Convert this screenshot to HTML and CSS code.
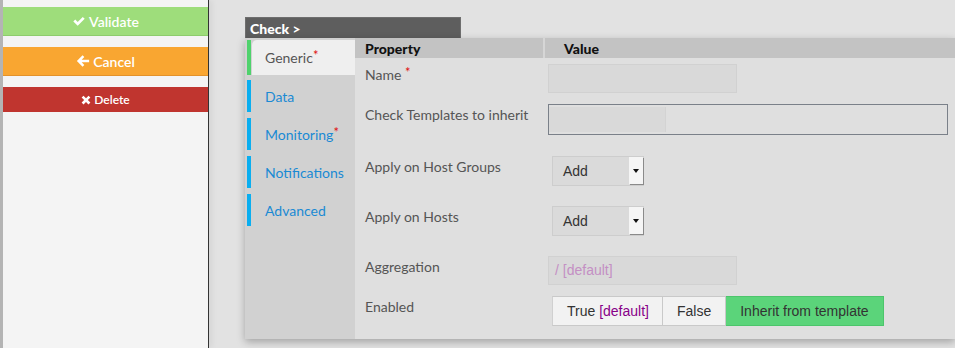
FILE: index.html
```html
<!DOCTYPE html>
<html lang="en">
  <head>
    <meta charset="UTF-8" />
    <meta name="viewport" content="width=device-width, initial-scale=1.0" />
    <title>Check</title>
    <link rel="stylesheet" href="styles.css">
  </head>
  <body>
    <aside class="sidebar">
      <button class="side-btn validate-btn">
        <svg width="14" height="14" viewBox="0 0 16 16" fill="currentColor">
          <path d="M1.5 8.5l2.2-2.2 2.8 2.8 5.8-5.8 2.2 2.2-8 8z" />
        </svg>
        Validate
      </button>
      <button class="side-btn cancel-btn">
        <svg width="14" height="14" viewBox="0 0 16 16" fill="currentColor">
          <path d="M1 8l6.5-6.5 2 2-3 3h8.5v3H6.5l3 3-2 2z" />
        </svg>
        Cancel
      </button>
      <button class="side-btn delete-btn">
        <svg width="10" height="10" viewBox="0 0 16 16" fill="currentColor">
          <path d="M1 4l3-3 4 4 4-4 3 3-4 4 4 4-3 3-4-4-4 4-3-3 4-4z" />
        </svg>
        Delete
      </button>
    </aside>

    <main class="content">
      <div class="crumb">Check &gt;</div>
      <div class="panel">
        <nav class="tabs">
          <div class="tab active"><a>Generic<sup>*</sup></a></div>
          <div class="tab"><a>Data</a></div>
          <div class="tab"><a>Monitoring<sup>*</sup></a></div>
          <div class="tab"><a>Notifications</a></div>
          <div class="tab"><a>Advanced</a></div>
        </nav>

        <section class="props">
          <div class="props-head">
            <div class="head-prop">Property</div>
            <div class="head-value">Value</div>
          </div>

          <div class="props-grid">
            <div class="label">Name <sup>*</sup></div>
            <div><div class="field short"></div></div>

            <div class="label">Check Templates to inherit</div>
            <div>
              <div class="field wide"><span class="chip"></span></div>
            </div>

            <div class="label">Apply on Host Groups</div>
            <div>
              <div class="select">
                <span>Add</span>
                <span class="caret"><i></i></span>
              </div>
            </div>

            <div class="label">Apply on Hosts</div>
            <div>
              <div class="select">
                <span>Add</span>
                <span class="caret"><i></i></span>
              </div>
            </div>

            <div class="label">Aggregation</div>
            <div><div class="field short placeholder">/ [default]</div></div>

            <div class="label">Enabled</div>
            <div>
              <div class="toggle">
                <span class="opt">True <em>[default]</em></span>
                <span class="opt">False</span>
                <span class="opt on">Inherit from template</span>
              </div>
            </div>
          </div>
        </section>
      </div>
    </main>
  </body>
</html>
```

FILE: styles.css
```css
body {
  margin: 0;
  display: flex;
  height: 348px;
  overflow: hidden;
  font-family: Lato, "Open Sans", sans-serif;
  background: #e2e2e2;
}
.sidebar {
  width: 205px;
  flex: none;
  background: #f4f4f4;
  border-left: 3px solid #b4b4b4;
  border-right: 1px solid #333;
  padding-top: 7px;
  box-shadow: 3px 0 6px rgba(0, 0, 0, 0.06);
}
.side-btn {
  display: flex;
  align-items: center;
  justify-content: center;
  gap: 3px;
  width: 100%;
  height: 29px;
  border: none;
  color: white;
  font-family: Lato, sans-serif;
  font-size: 14px;
  font-weight: 600;
  margin-bottom: 11px;
  padding: 0;
}
.validate-btn {
  background: #9edd7b;
  border-bottom: 1px solid #8dcc6c;
}
.cancel-btn {
  background: #f9a631;
  border-bottom: 1px solid #e3922a;
}
.delete-btn {
  background: #c0352f;
  height: 25px;
  font-size: 12px;
}
.content {
  flex: 1;
  padding: 17px 0 0 36px;
  min-width: 0;
}
.crumb {
  width: 210px;
  height: 20px;
  line-height: 21px;
  background: #5e5e5e;
  border: 1px solid #6e6e6e;
  border-bottom: none;
  color: white;
  font-weight: 900;
  font-size: 14px;
  padding-left: 4px;
}
.panel {
  display: flex;
  box-shadow: 0 3px 8px rgba(0, 0, 0, 0.28);
}
.tabs {
  width: 110px;
  flex: none;
  background: #d1d1d1;
  padding-top: 2px;
  display: flex;
  flex-direction: column;
  gap: 6px;
}
.tab {
  margin-left: 2px;
  border-left: 4px solid #0aaef0;
  height: 32px;
}
.tab a {
  display: block;
  height: 100%;
  line-height: 34px;
  padding-left: 14px;
  color: #1a8ad4;
  font-size: 14px;
}
.tab.active {
  border-left-color: #4fd26c;
  height: 35px;
  margin-bottom: -1px;
}
.tab.active a {
  background: #efefef;
  color: #555;
  border-radius: 5px 0 0 0;
  margin-left: 1px;
  padding-left: 13px;
  line-height: 36px;
}
sup {
  color: #e01010;
  font-size: 13px;
  line-height: 0;
  vertical-align: 3px;
}
.props {
  flex: 1;
  background: #dfdfdf;
  padding-bottom: 13px;
}
.props-head {
  display: flex;
  height: 20px;
  line-height: 21px;
  background: #c3c3c3;
  font-weight: 900;
  font-size: 14px;
  color: #111;
}
.head-prop {
  width: 178px;
  padding-left: 10px;
  border-right: 2px solid #d6d6d6;
}
.head-value {
  padding-left: 19px;
}
.props-grid {
  display: grid;
  grid-template-columns: 193px 1fr;
  grid-template-rows: 40px 52px 50px 50px 40px auto;
  padding-top: 6px;
}
.label {
  padding: 2px 0 0 10px;
  line-height: 17px;
  font-size: 14px;
  color: #555;
}
.field {
  box-sizing: border-box;
  height: 29px;
  background: #d9d9d9;
  border: 1px solid #d1d1d1;
}
.short {
  width: 189px;
}
.wide {
  width: 400px;
  height: 31px;
  background: #dfdfdf;
  border-color: #7a8089;
  padding: 2px 0 0 0;
}
.chip {
  display: block;
  width: 116px;
  height: 25px;
  background: #d9d9d9;
  border-right: 1px solid #d3d3d3;
}
.placeholder {
  font-family: "Liberation Sans", Arial, sans-serif;
  font-size: 14px;
  color: #c48fc4;
  line-height: 27px;
  padding-left: 6px;
}
.select {
  box-sizing: border-box;
  width: 92px;
  height: 30px;
  margin-left: 4px;
  display: flex;
  justify-content: space-between;
  background: #dadada;
  border: 1px solid #cdcdcd;
  font-family: "Liberation Sans", Arial, sans-serif;
  font-size: 14px;
  color: #333;
  line-height: 28px;
  padding-left: 10px;
}
.caret {
  width: 14px;
  height: 27px;
  background: #f5f5f5;
  box-shadow: 1px 1px 0 #8a8a8a;
  display: grid;
  place-content: center;
}
.caret i {
  width: 0;
  height: 0;
  border-left: 3px solid transparent;
  border-right: 3px solid transparent;
  border-top: 4px solid #111;
}
.toggle {
  display: flex;
  margin-left: 4px;
  font-family: "Liberation Sans", Arial, sans-serif;
  font-size: 14px;
  color: #333;
}
.opt {
  box-sizing: border-box;
  height: 30px;
  line-height: 28px;
  border: 1px solid #c9c9c9;
  border-left: none;
  background: #f2f2f2;
  padding: 0 14px;
}
.opt:first-child {
  border-left: 1px solid #d0d0d0;
  padding: 0 13px 0 14px;
}
.opt em {
  font-style: normal;
  color: #880088;
}
.opt.on {
  background: #5bd47a;
  border-color: #4cc56b;
  padding: 0 14px;
}
```
